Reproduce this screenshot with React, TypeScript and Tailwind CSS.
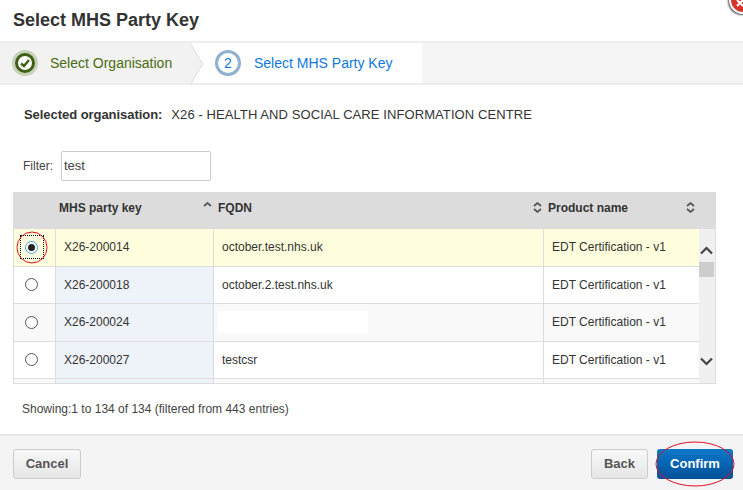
const font = { fontFamily: '"Liberation Sans", Arial, sans-serif' };

function Sort({ up }: { up?: boolean }) {
  return (
    <svg width="9" height="11" viewBox="0 0 9 11" className="shrink-0">
      <path d="M1 4 L4.5 1 L8 4" fill="none" stroke="#555" strokeWidth="1.7" />
      {!up && <path d="M1 7 L4.5 10 L8 7" fill="none" stroke="#555" strokeWidth="1.7" />}
    </svg>
  );
}

function Radio({ checked }: { checked?: boolean }) {
  if (checked) {
    return (
      <span className="w-[24px] h-[24px] border border-dotted border-black flex items-center justify-center">
        <span className="w-[13px] h-[13px] rounded-full border-[1.5px] border-[#4a9fe0] bg-white flex items-center justify-center">
          <span className="w-[7px] h-[7px] rounded-full bg-[#222]" />
        </span>
      </span>
    );
  }
  return <span className="w-[13px] h-[13px] rounded-full border border-[#555] bg-white" />;
}

const rows = [
  { key: "X26-200014", fqdn: "october.test.nhs.uk", sel: true },
  { key: "X26-200018", fqdn: "october.2.test.nhs.uk" },
  { key: "X26-200024", fqdn: "", alt: true, redacted: true },
  { key: "X26-200027", fqdn: "testcsr" },
];

function Row({ r }: { r: (typeof rows)[number] }) {
  const bg = r.sel ? "bg-[#ffffdd]" : r.alt ? "bg-[#f9f9f9]" : "bg-white";
  const keyBg = r.sel ? "bg-[#ffffdd]" : "bg-[#eef2f9]";
  return (
    <div className={`flex h-[37.5px] border-b border-[#dddddd] text-[12px] text-[#333] ${bg}`}>
      <div className="w-[42px] border-r border-[#dddddd] flex items-center justify-center pr-[6px]">
        <Radio checked={r.sel} />
      </div>
      <div className={`w-[158px] border-r border-[#dddddd] flex items-center pl-[8px] ${keyBg}`}>{r.key}</div>
      <div className="w-[330px] border-r border-[#dddddd] flex items-center pl-[8px]">
        {r.redacted ? <span className="w-[150px] h-[22px] -ml-[4px] bg-white" /> : r.fqdn}
      </div>
      <div className="flex-1 flex items-center pl-[8px]">EDT Certification - v1</div>
    </div>
  );
}

export default function App() {
  return (
    <div className="relative w-[743px] h-[490px] overflow-hidden bg-white text-[#333] flex flex-col" style={font}>
      <div className="h-[41px] flex items-center pl-[13px] text-[18px] font-bold text-[#333] shrink-0">
        Select MHS Party Key
      </div>
      <div className="h-[44px] shrink-0 border-y-2 border-[#eeeeee] flex">
        <div className="relative w-[190px] bg-[#f2f2f2] flex items-center pl-[12px] text-[14px] text-[#4b6b10]">
          <span className="w-[26px] h-[26px] rounded-full bg-[#c8d2b8] flex items-center justify-center mr-[12px]">
            <span className="w-[20px] h-[20px] rounded-full border-[3px] border-[#3f5f17] bg-white flex items-center justify-center">
              <svg width="12" height="12" viewBox="0 0 12 12">
                <path d="M2 6.5 L5 9 L10 3" fill="none" stroke="#3f5f17" strokeWidth="2.4" />
              </svg>
            </span>
          </span>
          Select Organisation
          <svg width="14" height="42" viewBox="0 0 14 42" className="absolute left-[190px] top-0">
            <path d="M0 0 L13 21 L0 42 Z" fill="#f2f2f2" />
            <path d="M0 0 L13 21 L0 42" fill="none" stroke="#dddddd" strokeWidth="1" />
          </svg>
        </div>
        <div className="w-[232px] bg-white flex items-center pl-[25px] text-[14px] text-[#0f78dc]">
          <span className="w-[26px] h-[26px] rounded-full border-[3px] border-[#8fb2d2] flex items-center justify-center mr-[13px]">
            2
          </span>
          Select MHS Party Key
        </div>
        <div className="flex-1 bg-[#f5f5f5]" />
      </div>

      <div className="flex-1 flex flex-col">
        <div className="flex items-center h-[16px] mt-[22px] ml-[24px] text-[13px]">
          <span className="font-bold mr-[9px] tracking-[-0.05px]">Selected organisation:</span>
          <span className="tracking-[0.085px]">X26 - HEALTH AND SOCIAL CARE INFORMATION CENTRE</span>
        </div>
        <div className="flex items-center mt-[28px] ml-[23px] h-[30px] text-[12px] text-[#444]">
          <span className="w-[38px]">Filter:</span>
          <div className="w-[150px] h-[30px] border border-[#cccccc] rounded-[2px] flex items-center pl-[2px] text-[13px] text-[#444]">
            test
          </div>
        </div>
        <div className="mt-[11px] ml-[13px] w-[703px] h-[192px] flex flex-col border border-t-0 border-[#dddddd] overflow-hidden">
          <div className="h-[37px] shrink-0 bg-[#dcdcdc] flex text-[12px] font-bold text-[#333]">
            <div className="w-[42px]" />
            <div className="w-[158px] flex items-center justify-between pl-[3px] pr-[2px] pb-[6px]">
              <span>MHS party key</span>
              <Sort up />
            </div>
            <div className="w-[330px] flex items-center justify-between pl-[4px] pr-[2px] pb-[6px]">
              <span>FQDN</span>
              <Sort />
            </div>
            <div className="w-[155px] flex items-center justify-between pl-[4px] pr-[4px] pb-[6px]">
              <span>Product name</span>
              <Sort />
            </div>
          </div>
          <div className="flex flex-1 min-h-0">
            <div className="w-[685px] overflow-hidden">
              {rows.map((r) => (
                <Row key={r.key} r={r} />
              ))}
              <div className="flex h-[20px] bg-[#f9f9f9]">
                <div className="w-[42px] border-r border-[#dddddd]" />
                <div className="w-[158px] border-r border-[#dddddd] bg-[#eef2f9]" />
                <div className="w-[330px] border-r border-[#dddddd]" />
              </div>
            </div>
            <div className="flex-1 bg-[#f0f0f0] flex flex-col items-center pt-[17px] pr-[1px]">
              <svg width="13" height="9" viewBox="0 0 13 9">
                <path d="M1 7.5 L6.5 2 L12 7.5" fill="none" stroke="#444" strokeWidth="2.2" />
              </svg>
              <div className="w-[15px] h-[15px] bg-[#cdcdcd] mt-[7px]" />
              <div className="flex-1" />
              <svg width="13" height="9" viewBox="0 0 13 9" className="mb-[17px]">
                <path d="M1 1.5 L6.5 7 L12 1.5" fill="none" stroke="#444" strokeWidth="2.2" />
              </svg>
            </div>
          </div>
        </div>
        <div className="mt-[17px] ml-[22px] text-[12px] text-[#444] h-[16px] flex items-center">
          Showing:1 to 134 of 134 (filtered from 443 entries)
        </div>
      </div>

      <div className="h-[56px] shrink-0 bg-[#f4f4f4] border-t-2 border-[#e5e5e5] flex items-center justify-between pl-[13px] pr-[10px] pt-[2px]">
        <button className="w-[68px] h-[30px] rounded-[3px] border border-[#cccccc] bg-gradient-to-b from-[#f8f8f8] to-[#e6e6e6] text-[13px] font-bold text-[#555]">
          Cancel
        </button>
        <div className="flex items-center gap-[9px]">
          <button className="w-[57px] h-[30px] rounded-[3px] border border-[#cccccc] bg-gradient-to-b from-[#f8f8f8] to-[#e6e6e6] text-[13px] font-bold text-[#555]">
            Back
          </button>
          <button className="w-[76px] h-[30px] rounded-[3px] bg-gradient-to-b from-[#0a78c8] to-[#04509a] text-[13px] font-bold text-white">
            Confirm
          </button>
        </div>
      </div>

      {/* red hand-drawn annotations and the close badge, lying over the page */}
      <svg width="743" height="490" viewBox="0 0 743 490" className="absolute inset-0 pointer-events-none">
        <ellipse cx="32" cy="247.5" rx="15" ry="15.5" fill="none" stroke="#e01020" strokeWidth="1" />
        <ellipse cx="695" cy="464" rx="39" ry="22" fill="none" stroke="#e01020" strokeWidth="1" />
      </svg>
      <div className="absolute left-[729px] -top-[14px] w-[28px] h-[28px] rounded-full bg-[#d8352a] border-2 border-white shadow-[-1px_1px_2px_#555]" />
      <svg width="14" height="12" viewBox="0 0 14 12" className="absolute left-[734px] top-0">
        <path d="M3 0 L9 6 M3 6 L9 0" stroke="#fff" strokeWidth="2" />
      </svg>
    </div>
  );
}
